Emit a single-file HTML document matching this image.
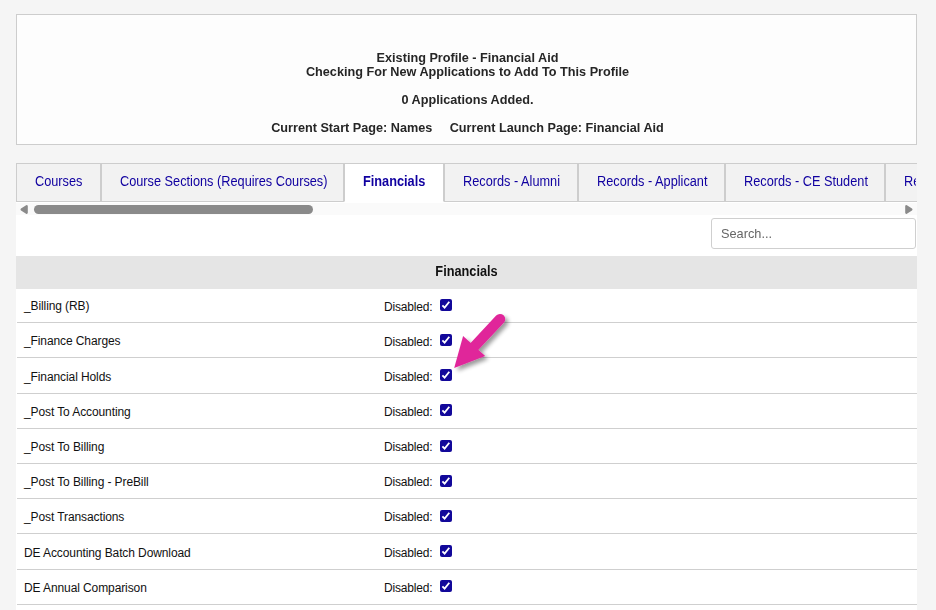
<!DOCTYPE html>
<html><head><meta charset="utf-8">
<style>
html,body{margin:0;padding:0;}
body{width:936px;height:610px;overflow:hidden;background:#f5f5f5;position:relative;font-family:"Liberation Sans",sans-serif;}
.abs{position:absolute;}
#hdr{left:16px;top:14px;width:899px;height:129px;border:1px solid #cdcdcd;background:#fdfdfd;}
.ht{position:absolute;left:0;width:901px;text-align:center;font-weight:bold;font-size:13.5px;transform:scaleX(0.938);transform-origin:450.5px 0;color:#262626;white-space:nowrap;line-height:14px;}
#content{left:16px;top:201px;width:901px;height:409px;background:#fff;}
.tab{position:absolute;top:163px;height:37px;border:1px solid #cdcdcd;background:#f2f2f2;box-sizing:content-box;}
.tt{position:absolute;top:174px;font-size:14px;transform:scaleX(0.91);transform-origin:0 0;color:#1000a0;white-space:nowrap;line-height:14px;}
#track{left:16px;top:203px;width:901px;height:12px;background:#fafafa;}
#thumb{left:34px;top:205px;width:279px;height:9px;border-radius:4.5px;background:#8a8a8a;}
#search{left:711px;top:218px;width:203px;height:29px;border:1px solid #cfcfcf;border-radius:3px;background:#fff;}
#search span{position:absolute;left:8.6px;top:8px;font-size:13.5px;transform:scaleX(0.945);transform-origin:0 0;color:#666;line-height:14px;}
#th{left:16px;top:256px;width:901px;height:33px;background:#e5e5e5;}
#th span{position:absolute;left:0;width:901px;text-align:center;top:8px;font-weight:bold;font-size:14px;transform:scaleX(0.91);transform-origin:450.5px 0;color:#111;line-height:14px;}
.rl{position:absolute;left:17px;width:900px;height:1px;background:#cfcfcf;}
.rt{position:absolute;left:24px;font-size:12px;letter-spacing:-0.1px;color:#111;white-space:nowrap;line-height:14px;}
.dl{position:absolute;left:384px;font-size:12px;color:#111;white-space:nowrap;line-height:14px;letter-spacing:-0.18px;}
.cb{position:absolute;left:440px;width:12px;height:12px;border-radius:2px;background:#12089a;}
.cb svg{position:absolute;left:0;top:0;}
</style></head>
<body>
<div id="hdr" class="abs">
  <div class="ht" style="top:36px">Existing Profile - Financial Aid</div>
  <div class="ht" style="top:50px">Checking For New Applications to Add To This Profile</div>
  <div class="ht" style="top:78px">0 Applications Added.</div>
  <div class="ht" style="top:106px">Current Start Page: Names<span style="display:inline-block;width:18.5px"></span>Current Launch Page: Financial Aid</div>
</div>

<div id="content" class="abs"></div>

<div class="tab" style="left:16px;width:83px"></div>
<div class="tab" style="left:101px;width:241px"></div>
<div class="tab" style="left:344px;width:98px;background:#fff;border-bottom-color:#fff"></div>
<div class="tab" style="left:444px;width:132px"></div>
<div class="tab" style="left:578px;width:145px"></div>
<div class="tab" style="left:725px;width:158px"></div>
<div class="tab" style="left:885px;width:100px"></div>
<div class="abs" style="left:917px;top:150px;width:19px;height:60px;background:#f5f5f5"></div>

<div class="tt" style="left:35px">Courses</div>
<div class="tt" style="left:120px">Course Sections (Requires Courses)</div>
<div class="tt" style="left:363px;font-weight:bold">Financials</div>
<div class="tt" style="left:463px">Records - Alumni</div>
<div class="tt" style="left:596.5px">Records - Applicant</div>
<div class="tt" style="left:744px">Records - CE Student</div>
<div class="tt" style="left:904px;width:13px;overflow:hidden">Records</div>

<div id="track" class="abs"></div>
<svg class="abs" style="left:19px;top:204px" width="10" height="11" viewBox="0 0 10 11"><path d="M2.6 5.5 L7.7 2.2 L7.7 8.8 Z" fill="#8a8a8a" stroke="#8a8a8a" stroke-width="2.2" stroke-linejoin="round"/></svg>
<div id="thumb" class="abs"></div>
<svg class="abs" style="left:904px;top:204px" width="10" height="11" viewBox="0 0 10 11"><path d="M7.4 5.5 L2.3 2.2 L2.3 8.8 Z" fill="#8a8a8a" stroke="#8a8a8a" stroke-width="2.2" stroke-linejoin="round"/></svg>

<div id="search" class="abs"><span>Search...</span></div>

<div id="th" class="abs"><span>Financials</span></div>

<div id="rows">
<div class="rl" style="top:322px"></div><div class="rt" style="top:299px">_Billing (RB)</div><div class="dl" style="top:300px">Disabled:</div><div class="cb" style="top:299px"><svg width="12" height="12" viewBox="0 0 12 12"><path d="M2.4 6.3 L4.6 8.6 L9.3 2.7" fill="none" stroke="#fff" stroke-width="1.8"/></svg></div>
<div class="rl" style="top:357px"></div><div class="rt" style="top:334px">_Finance Charges</div><div class="dl" style="top:335px">Disabled:</div><div class="cb" style="top:334px"><svg width="12" height="12" viewBox="0 0 12 12"><path d="M2.4 6.3 L4.6 8.6 L9.3 2.7" fill="none" stroke="#fff" stroke-width="1.8"/></svg></div>
<div class="rl" style="top:393px"></div><div class="rt" style="top:370px">_Financial Holds</div><div class="dl" style="top:370px">Disabled:</div><div class="cb" style="top:369px"><svg width="12" height="12" viewBox="0 0 12 12"><path d="M2.4 6.3 L4.6 8.6 L9.3 2.7" fill="none" stroke="#fff" stroke-width="1.8"/></svg></div>
<div class="rl" style="top:428px"></div><div class="rt" style="top:405px">_Post To Accounting</div><div class="dl" style="top:405px">Disabled:</div><div class="cb" style="top:404px"><svg width="12" height="12" viewBox="0 0 12 12"><path d="M2.4 6.3 L4.6 8.6 L9.3 2.7" fill="none" stroke="#fff" stroke-width="1.8"/></svg></div>
<div class="rl" style="top:463px"></div><div class="rt" style="top:440px">_Post To Billing</div><div class="dl" style="top:440px">Disabled:</div><div class="cb" style="top:440px"><svg width="12" height="12" viewBox="0 0 12 12"><path d="M2.4 6.3 L4.6 8.6 L9.3 2.7" fill="none" stroke="#fff" stroke-width="1.8"/></svg></div>
<div class="rl" style="top:498px"></div><div class="rt" style="top:475px">_Post To Billing - PreBill</div><div class="dl" style="top:475px">Disabled:</div><div class="cb" style="top:475px"><svg width="12" height="12" viewBox="0 0 12 12"><path d="M2.4 6.3 L4.6 8.6 L9.3 2.7" fill="none" stroke="#fff" stroke-width="1.8"/></svg></div>
<div class="rl" style="top:533px"></div><div class="rt" style="top:510px">_Post Transactions</div><div class="dl" style="top:510px">Disabled:</div><div class="cb" style="top:510px"><svg width="12" height="12" viewBox="0 0 12 12"><path d="M2.4 6.3 L4.6 8.6 L9.3 2.7" fill="none" stroke="#fff" stroke-width="1.8"/></svg></div>
<div class="rl" style="top:569px"></div><div class="rt" style="top:546px">DE Accounting Batch Download</div><div class="dl" style="top:546px">Disabled:</div><div class="cb" style="top:545px"><svg width="12" height="12" viewBox="0 0 12 12"><path d="M2.4 6.3 L4.6 8.6 L9.3 2.7" fill="none" stroke="#fff" stroke-width="1.8"/></svg></div>
<div class="rl" style="top:604px"></div><div class="rt" style="top:581px">DE Annual Comparison</div><div class="dl" style="top:581px">Disabled:</div><div class="cb" style="top:580px"><svg width="12" height="12" viewBox="0 0 12 12"><path d="M2.4 6.3 L4.6 8.6 L9.3 2.7" fill="none" stroke="#fff" stroke-width="1.8"/></svg></div>
<div class="rl" style="top:639px"></div><div class="rt" style="top:616px">DE Award Data</div><div class="dl" style="top:616px">Disabled:</div><div class="cb" style="top:615px"><svg width="12" height="12" viewBox="0 0 12 12"><path d="M2.4 6.3 L4.6 8.6 L9.3 2.7" fill="none" stroke="#fff" stroke-width="1.8"/></svg></div>
</div>

<svg class="abs" style="left:440px;top:305px" width="80" height="80" viewBox="0 0 80 80">
  <defs><filter id="sh" x="-30%" y="-30%" width="160%" height="160%"><feGaussianBlur in="SourceAlpha" stdDeviation="2"/><feOffset dx="2.5" dy="3" result="b"/><feComponentTransfer><feFuncA type="linear" slope="0.4"/></feComponentTransfer><feMerge><feMergeNode/><feMergeNode in="SourceGraphic"/></feMerge></filter></defs>
  <g filter="url(#sh)">
    <line x1="60" y1="14.2" x2="33" y2="43" stroke="#e0289a" stroke-width="10.5" stroke-linecap="round"/>
    <path d="M14.2 62.9 L23.1 31 L45.2 51.1 Z" fill="#e0289a"/>
  </g>
</svg>
</body></html>
